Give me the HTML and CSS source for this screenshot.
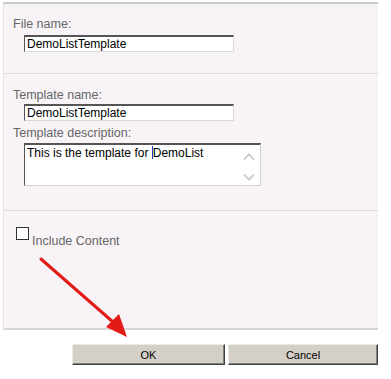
FILE: index.html
```html
<!DOCTYPE html>
<html lang="en">
<head>
    <meta charset="UTF-8">
    <title>Save as Template</title>
    <link rel="stylesheet" href="styles.css">
</head>
<body>
    <div class="panel">
        <div class="section first">
            <div class="label">File name:</div>
            <div class="input">DemoListTemplate</div>
        </div>
        <div class="section second">
            <div class="label">Template name:</div>
            <div class="input">DemoListTemplate</div>
            <div class="label desc">Template description:</div>
            <div class="textarea">
                <div class="text">This is the template for <span class="caret"></span>DemoList</div>
                <div class="scroll">
                    <svg width="12" height="8" viewBox="0 0 12 8"><path d="M1 6.5 L6 1.5 L11 6.5" fill="none" stroke="#c4c4c4" stroke-width="1.6"/></svg>
                    <svg width="12" height="8" viewBox="0 0 12 8"><path d="M1 1.5 L6 6.5 L11 1.5" fill="none" stroke="#c4c4c4" stroke-width="1.6"/></svg>
                </div>
            </div>
        </div>
        <div class="section third">
            <label class="check"><span class="box"></span><span class="check-text">Include Content</span></label>
        </div>
    </div>
    <div class="buttons">
        <button class="button ok">OK</button>
        <button class="button cancel">Cancel</button>
    </div>

    <svg class="arrow" width="391" height="379" viewBox="0 0 391 379">
        <line x1="41" y1="259" x2="113" y2="322" stroke="#e31b17" stroke-width="3" stroke-linecap="round"/>
        <polygon points="106,327 119,314 127,337" fill="#e31b17"/>
    </svg>
</body>
</html>
```

FILE: styles.css
```css
body {
    margin: 0;
    background-color: #fff;
    font-family: "Liberation Sans", Arial, sans-serif;
    font-size: 12px;
    position: relative;
    width: 391px;
    height: 379px;
    overflow: hidden;
}

.panel {
    margin: 2px 0 0 3px;
    width: 374px;
    background-color: #f7f3f7;
    border-top: 2px solid #cacaca;
    border-left: 1px solid #e4e0e4;
}

.section {
    border-bottom: 1px solid #dcd8dc;
    padding-left: 9px;
    box-sizing: border-box;
}

.section.first {
    height: 70px;
    padding-top: 13px;
}

.section.second {
    height: 137px;
    padding-top: 14px;
}

.section.second .input {
    margin-top: 1px;
}

.section.third {
    height: 119px;
    padding-top: 16px;
    border-bottom: 2px solid #d8d4d8;
}

.label {
    color: #666;
    font-size: 12.5px;
    line-height: 15px;
    height: 15px;
}

.label.desc {
    margin-top: 5px;
}

.input {
    margin: 3px 0 0 11px;
    width: 206px;
    height: 14px;
    line-height: 14px;
    padding-left: 2px;
    background-color: #fff;
    color: #000;
    border: 1px solid;
    border-color: #555 #d8d8d8 #d8d8d8 #555;
    border-top-width: 2px;
}

.textarea {
    margin: 2px 0 0 11px;
    width: 235px;
    height: 40px;
    background-color: #fff;
    border: 1px solid;
    border-color: #555 #d0d0d0 #d0d0d0 #555;
    border-top-width: 2px;
    display: flex;
}

.textarea .text {
    flex: 1;
    padding: 1px 0 0 2px;
    line-height: 15px;
    color: #000;
}

.caret {
    display: inline-block;
    width: 1px;
    height: 13px;
    background-color: #1a3cc8;
    vertical-align: -2px;
}

.scroll {
    width: 17px;
    display: flex;
    flex-direction: column;
    justify-content: space-between;
    padding: 8px 0 4px;
}

.check {
    display: flex;
    align-items: flex-end;
}

.box {
    display: block;
    margin-left: 3px;
    width: 11px;
    height: 11px;
    border: 1px solid #333;
    background-color: #fff;
}

.check-text {
    color: #666;
    font-size: 12.5px;
    margin-left: 3px;
    line-height: 12px;
    position: relative;
    top: 7px;
}

.buttons {
    display: flex;
    justify-content: flex-end;
    gap: 3px;
    padding-right: 13px;
    margin-top: 14px;
}

.button {
    height: 21px;
    background-color: #d4d0c8;
    font-family: "Liberation Sans", Tahoma, sans-serif;
    font-size: 11px;
    color: #000;
    border: 1px solid;
    border-color: #ecebe6 #404040 #404040 #ecebe6;
    box-shadow: inset -1px -1px #808080;
    padding: 0;
}

.button.ok {
    width: 153px;
}

.button.cancel {
    width: 150px;
}

.arrow {
    position: absolute;
    left: 0;
    top: 0;
    pointer-events: none;
}
```
